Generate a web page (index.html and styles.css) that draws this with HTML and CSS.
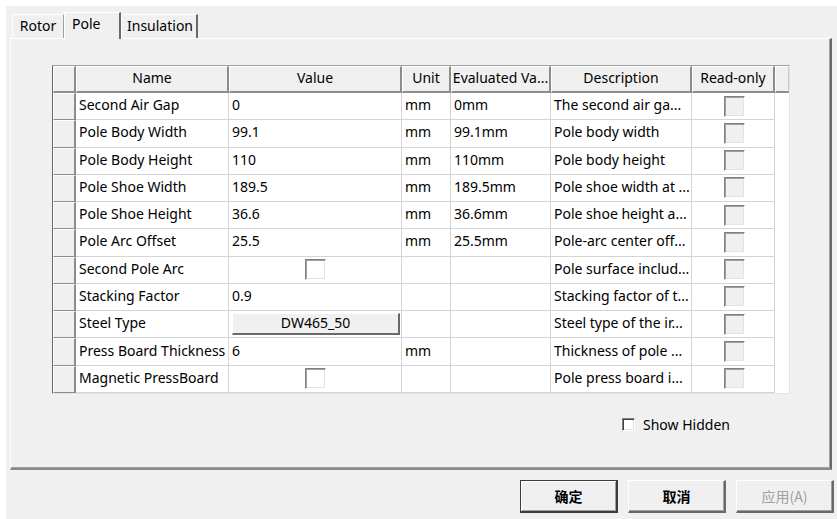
FILE: index.html
```html
<!DOCTYPE html>
<html>
<head>
<meta charset="utf-8">
<link rel="stylesheet" href="styles.css">
</head>
<body>
<div class="window">
  <div class="tabs">
    <div class="tab">Rotor</div>
    <div class="tab active">Pole</div>
    <div class="tab last">Insulation</div>
  </div>
  <div class="panel">
    <div class="grid">
      <div class="row head">
        <div class="hc rh"></div>
        <div class="hc">Name</div>
        <div class="hc">Value</div>
        <div class="hc">Unit</div>
        <div class="hc">Evaluated Va...</div>
        <div class="hc">Description</div>
        <div class="hc">Read-only</div>
        <div class="hc stub"></div>
      </div>
      <div class="row"><div class="rh"></div><div class="c">Second Air Gap</div><div class="c">0</div><div class="c">mm</div><div class="c">0mm</div><div class="c">The second air ga...</div><div class="c ctr"><span class="cb ro"></span></div></div>
      <div class="row"><div class="rh"></div><div class="c">Pole Body Width</div><div class="c">99.1</div><div class="c">mm</div><div class="c">99.1mm</div><div class="c">Pole body width</div><div class="c ctr"><span class="cb ro"></span></div></div>
      <div class="row"><div class="rh"></div><div class="c">Pole Body Height</div><div class="c">110</div><div class="c">mm</div><div class="c">110mm</div><div class="c">Pole body height</div><div class="c ctr"><span class="cb ro"></span></div></div>
      <div class="row"><div class="rh"></div><div class="c">Pole Shoe Width</div><div class="c">189.5</div><div class="c">mm</div><div class="c">189.5mm</div><div class="c">Pole shoe width at ...</div><div class="c ctr"><span class="cb ro"></span></div></div>
      <div class="row"><div class="rh"></div><div class="c">Pole Shoe Height</div><div class="c">36.6</div><div class="c">mm</div><div class="c">36.6mm</div><div class="c">Pole shoe height a...</div><div class="c ctr"><span class="cb ro"></span></div></div>
      <div class="row"><div class="rh"></div><div class="c">Pole Arc Offset</div><div class="c">25.5</div><div class="c">mm</div><div class="c">25.5mm</div><div class="c">Pole-arc center off...</div><div class="c ctr"><span class="cb ro"></span></div></div>
      <div class="row"><div class="rh"></div><div class="c">Second Pole Arc</div><div class="c ctr"><span class="cb"></span></div><div class="c"></div><div class="c"></div><div class="c">Pole surface includ...</div><div class="c ctr"><span class="cb ro"></span></div></div>
      <div class="row"><div class="rh"></div><div class="c">Stacking Factor</div><div class="c">0.9</div><div class="c"></div><div class="c"></div><div class="c">Stacking factor of t...</div><div class="c ctr"><span class="cb ro"></span></div></div>
      <div class="row"><div class="rh"></div><div class="c">Steel Type</div><div class="c btncell"><span class="cellbtn">DW465_50</span></div><div class="c"></div><div class="c"></div><div class="c">Steel type of the ir...</div><div class="c ctr"><span class="cb ro"></span></div></div>
      <div class="row"><div class="rh"></div><div class="c">Press Board Thickness</div><div class="c">6</div><div class="c">mm</div><div class="c"></div><div class="c">Thickness of pole ...</div><div class="c ctr"><span class="cb ro"></span></div></div>
      <div class="row"><div class="rh"></div><div class="c">Magnetic PressBoard</div><div class="c ctr"><span class="cb"></span></div><div class="c"></div><div class="c"></div><div class="c">Pole press board i...</div><div class="c ctr"><span class="cb ro"></span></div></div>
    </div>
    <div class="showhidden"><span class="smallcb"></span><span>Show Hidden</span></div>
  </div>
  <div class="buttons">
    <div class="btn default">确定</div>
    <div class="btn">取消</div>
    <div class="btn disabled">应用(A)</div>
  </div>
</div>
</body>
</html>
```

FILE: styles.css
```css
html, body {
  margin: 0;
  padding: 0;
  background: #ffffff;
}
body {
  font-family: "Noto Sans", "Noto Sans CJK SC", sans-serif;
  font-size: 14px;
  color: #000;
}
.window {
  margin: 6px 0 0 6px;
  width: 831px;
  height: 513px;
  background: #f0f0f0;
  display: flex;
  flex-direction: column;
}
.tabs {
  display: flex;
  align-items: flex-end;
  height: 32px;
  padding-left: 6px;
}
.tab {
  height: 24px;
  line-height: 22px;
  padding: 0 6px 0 6px;
  border-top: 1px solid #ffffff;
  border-left: 1px solid #ffffff;
  border-right: 1px solid #a0a0a0;
  width: 52px;
  box-sizing: border-box;
  text-align: center;
}
.tab.active {
  height: 27px;
  line-height: 21px;
  width: 57px;
  padding: 0 0 0 7px;
  text-align: left;
  border-right: 2px solid #696969;
  position: relative;
  top: 1px;
  background: #f0f0f0;
}
.tab.last {
  width: 77px;
  padding: 0 0 0 5px;
  text-align: left;
  border-right: 2px solid #696969;
}
.panel {
  margin-left: 4px;
  width: 822px;
  height: 432px;
  box-sizing: border-box;
  border-top: 1px solid #ffffff;
  border-left: 1px solid #ffffff;
  border-right: 2px solid #696969;
  border-bottom: 2px solid #8a8a8a;
  box-shadow: inset -1px -1px 0 #a0a0a0;
  padding: 26px 0 0 41px;
}
.grid {
  width: 738px;
  height: 329px;
  box-sizing: border-box;
  background: #ffffff;
  border-top: 1px solid #a0a0a0;
  border-left: 1px solid #696969;
  border-right: 1px solid #e3e3e3;
  border-bottom: 1px solid #e3e3e3;
  display: flex;
  flex-direction: column;
}
.row {
  display: grid;
  grid-template-columns: 23px 153px 173px 49px 100px 141px 83px;
  height: 27.27px;
}
.row.head {
  grid-template-columns: 23px 153px 173px 49px 100px 141px 83px 14px;
  height: 27px;
}
.hc {
  background: #f0f0f0;
  box-sizing: border-box;
  border-top: 1px solid #ffffff;
  border-left: 1px solid #ffffff;
  border-right: 2px solid #8c8c8c;
  border-bottom: 2px solid #8c8c8c;
  text-align: center;
  line-height: 21px;
  white-space: nowrap;
  overflow: hidden;
}
.hc.stub {
  border-right: 1px solid #c8c8c8;
}
.rh {
  background: #f0f0f0;
  box-sizing: border-box;
  border-top: 1px solid #ffffff;
  border-left: 1px solid #ffffff;
  border-right: 2px solid #8c8c8c;
  border-bottom: 2px solid #8c8c8c;
}
.row:not(.head) .rh {
  border-bottom: 1px solid #8c8c8c;
}
.c {
  box-sizing: border-box;
  border-right: 1px solid #d4d4d4;
  border-bottom: 1px solid #d4d4d4;
  padding: 0 0 3px 3px;
  display: flex;
  align-items: center;
  white-space: nowrap;
  overflow: hidden;
}
.c.ctr {
  justify-content: center;
  padding: 0;
}
.cb {
  display: block;
  width: 21px;
  height: 21px;
  box-sizing: border-box;
  border-top: 1px solid #808080;
  border-left: 1px solid #808080;
  border-right: 1px solid #ffffff;
  border-bottom: 1px solid #ffffff;
  box-shadow: inset 1px 1px 0 #a0a0a0, inset -1px -1px 0 #e3e3e3;
  background: #ffffff;
}
.cb.ro {
  background: #f0f0f0;
  margin-left: 2px;
}
.c.btncell {
  padding: 0 0 0 3px;
}
.cellbtn {
  display: block;
  width: 168px;
  height: 22px;
  line-height: 18px;
  text-align: center;
  box-sizing: border-box;
  background: #f0f0f0;
  border-top: 1px solid #ffffff;
  border-left: 1px solid #ffffff;
  border-right: 2px solid #696969;
  border-bottom: 2px solid #696969;
}
.showhidden {
  display: flex;
  align-items: center;
  gap: 8px;
  margin: 21px 0 0 570px;
}
.smallcb {
  width: 13px;
  height: 13px;
  box-sizing: border-box;
  border-top: 1px solid #808080;
  border-left: 1px solid #808080;
  border-right: 1px solid #ffffff;
  border-bottom: 1px solid #ffffff;
  box-shadow: inset 1px 1px 0 #404040, inset -1px -1px 0 #e3e3e3;
  background: #ffffff;
}
.buttons {
  display: flex;
  gap: 10px;
  margin: 10px 0 0 514px;
}
.btn {
  width: 98px;
  height: 33px;
  box-sizing: border-box;
  display: flex;
  align-items: center;
  justify-content: center;
  font-family: "Noto Sans CJK SC", sans-serif;
  font-weight: bold;
  font-size: 14px;
  background: #f0f0f0;
  border-top: 1px solid #ffffff;
  border-left: 1px solid #ffffff;
  border-right: 2px solid #696969;
  border-bottom: 2px solid #696969;
  box-shadow: inset -1px -1px 0 #a0a0a0;
}
.btn.default {
  border: 1px solid #3c3c3c;
  border-right: 2px solid #3c3c3c;
  border-bottom: 2px solid #3c3c3c;
  box-shadow: inset 1px 1px 0 #ffffff, inset -1px -1px 0 #a0a0a0;
}
.btn.disabled {
  color: #a0a0a0;
  font-weight: normal;
}
```
